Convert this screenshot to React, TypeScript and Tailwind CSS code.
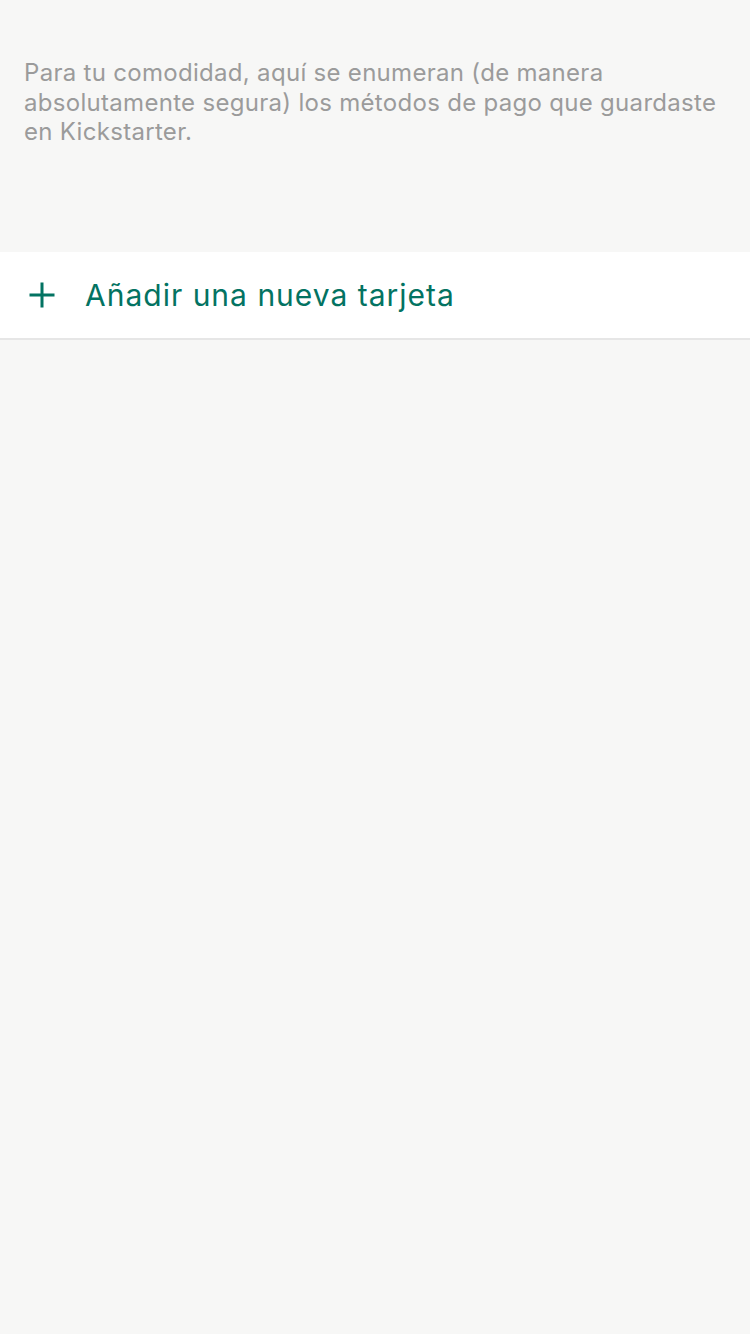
import React from "react";

export default function App() {
  return (
    <div className="min-h-[1334px] w-[750px] bg-[#f7f7f6]" style={{ fontFamily: "Inter, 'Noto Sans', sans-serif" }}>
      <div className="pt-[58px] pl-[24px] pr-[20px] h-[252px]">
        <p className="text-[24px] leading-[29.5px] tracking-[0.3px] text-[#9b9b9b]">
          Para tu comodidad, aquí se enumeran (de manera absolutamente segura) los métodos de pago que guardaste en Kickstarter.
        </p>
      </div>
      <div className="h-[88px] bg-white border-b-2 border-[#e6e6e6] flex items-center pl-[28px]">
        <svg width="28" height="28" viewBox="0 0 28 28" className="shrink-0">
          <path d="M14 1.5V26.5M1.5 14H26.5" stroke="#037362" strokeWidth="3" />
        </svg>
        <span className="ml-[29px] text-[30px] tracking-[1px] text-[#037362] leading-none">Añadir una nueva tarjeta</span>
      </div>
    </div>
  );
}
